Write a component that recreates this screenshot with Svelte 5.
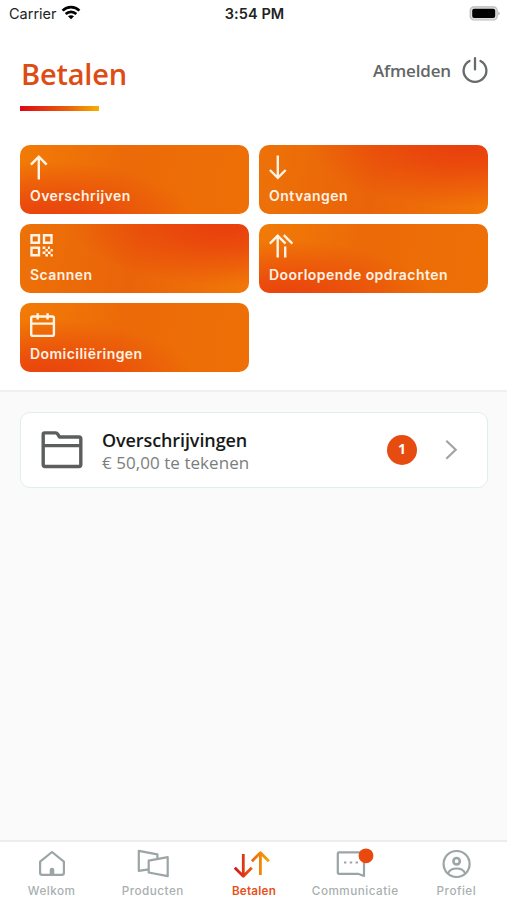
<script lang="ts">
  const actions = [
    { label: 'Overschrijven', icon: 'up', tone: 'low' },
    { label: 'Ontvangen', icon: 'down', tone: 'high' },
    { label: 'Scannen', icon: 'qr', tone: 'high' },
    { label: 'Doorlopende opdrachten', icon: 'repeat', tone: 'low' },
    { label: 'Domiciliëringen', icon: 'calendar', tone: 'low' }
  ];
  const tabs = [
    { label: 'Welkom', icon: 'home' },
    { label: 'Producten', icon: 'products' },
    { label: 'Betalen', icon: 'pay' },
    { label: 'Communicatie', icon: 'chat' },
    { label: 'Profiel', icon: 'profile' }
  ];
  let active = $state('Betalen');
</script>

<div class="screen">
  <div class="status">
    <div class="carrier">
      <span>Carrier</span>
      <svg width="20" height="15" viewBox="0 0 20 15" fill="none" stroke="#000" stroke-width="2.7">
        <path d="M1.6 5.6C6.3 .9 13.7 .9 18.4 5.6" />
        <path d="M4.7 9C7.7 6.1 12.3 6.1 15.3 9" />
        <path d="M10 14.2L7 11.3C8.7 9.8 11.3 9.8 13 11.3Z" fill="#000" stroke="none" />
      </svg>
    </div>
    <span class="time">3:54 PM</span>
    <svg class="battery" width="31" height="15" viewBox="0 0 31 15">
      <rect x="1.2" y=".8" width="27" height="13.2" rx="3.8" fill="#ddd" stroke="#bbb" stroke-width="1.2" />
      <rect x="3.2" y="2.7" width="23" height="9.4" rx="2" fill="#000" />
      <path d="M29.4 5.2Q32 7.4 29.4 9.6Z" fill="#aaa" />
    </svg>
  </div>

  <section class="top">
    <header>
      <div class="heading">
        <h1>Betalen</h1>
        <div class="underline"></div>
      </div>
      <button class="logout">
        <span>Afmelden</span>
        <svg width="26" height="27" viewBox="0 0 26 27" fill="none" stroke="#666a6a" stroke-width="2.3" stroke-linecap="round">
          <path d="M13 1.2V12.4M7.5 3.9A11.4 11.2 0 1 0 18.5 3.9" />
        </svg>
      </button>
    </header>

    <div class="actions">
      {#each actions as action}
        <button class="tile {action.tone}">
          <svg width="28" height="26" viewBox="0 0 28 26" fill="none" stroke="#fff4e6" stroke-width="2.4">
            {#if action.icon === 'up'}
              <path d="M8.8 25.4V3M.9 10.6L8.8 2.7L16.7 10.6" />
            {:else if action.icon === 'down'}
              <path d="M8.8 1.4V23.8M.9 16L8.8 23.9L16.7 16" />
            {:else if action.icon === 'qr'}
              <path d="M1.5 2.3H9V9.8H1.5ZM14 2.3H21.5V9.8H14ZM1.5 14.7H9V22.3H1.5Z" />
              <path
                d="M12.6 13.4h2.8v2.5h-2.8zM17.9 13.4h2v2.5h-2zM20.6 15.9h2.2v2.5h-2.2zM15.4 15.9h2.5v2.5h-2.5zM12.6 18.4h2.8v2.5h-2.8zM17.9 18.4h2.7v2.5h-2.7zM15.4 20.9h2.5v2.6h-2.5zM20.6 20.9h2.2v2.6h-2.2z"
                fill="#fff4e6"
                stroke="none"
              />
            {:else if action.icon === 'repeat'}
              <path d="M8.7 24.5V3M.8 10.6L8.7 2.7L16.6 10.6M14.8 2.2L23.4 10.7M16.2 13.5V24.5" />
            {:else}
              <rect x="1.2" y="4.5" width="22.7" height="19.4" rx="1.6" />
              <path d="M1.2 11.6H24M7.7 1.2V7.6M17.6 1.2V7.6" />
            {/if}
          </svg>
          <span>{action.label}</span>
        </button>
      {/each}
    </div>
  </section>

  <main>
    <button class="card">
      <svg width="42" height="38" viewBox="0 0 42 38" fill="none" stroke="#5c5e5e" stroke-width="3.4" stroke-linejoin="round">
        <path d="M3.5 1.9H14.5Q16 1.9 16.7 3.2L18.5 6H38Q39.8 6 39.8 7.8V33.6Q39.8 35.5 38 35.5H4Q2.2 35.5 2.2 33.6V3.3Q2.2 1.9 3.5 1.9ZM2.2 14.6H39.8" />
      </svg>
      <div class="info">
        <strong>Overschrijvingen</strong>
        <span>€ 50,00 te tekenen</span>
      </div>
      <div class="count">1</div>
      <svg class="chevron" width="13" height="22" viewBox="0 0 13 22" fill="none" stroke="#a0a4a4" stroke-width="2.2">
        <path d="M1.3 1.8L10.7 10.8L1.3 19.8" />
      </svg>
    </button>
  </main>

  <nav>
    {#each tabs as tab}
      <button class="tab" class:active={active === tab.label} onclick={() => (active = tab.label)}>
        <svg width="38" height="30" viewBox="0 0 38 30" fill="none" stroke="#9ba5a6" stroke-width="2.2" stroke-linejoin="round">
          {#if tab.icon === 'home'}
            <path d="M7.1 13.6L19 4L30.9 13.6V24.7Q30.9 26.9 28.7 26.9H9.3Q7.1 26.9 7.1 24.7Z" />
            <path d="M16.7 26.4V21.9Q16.7 19.8 19 19.8T21.3 21.9V26.4Z" fill="#9ba5a6" stroke="none" />
          {:else if tab.icon === 'products'}
            <path d="M14.7 21.3L4.8 22.8V2.8L23.4 6.4V10.6" />
            <path d="M14.7 12.6L33.7 9.2V28.2L14.7 24.5Z" />
          {:else if tab.icon === 'pay'}
            <defs>
              <linearGradient id="pay-down" gradientUnits="userSpaceOnUse" x1="-1" y1="0" x2="17" y2="0">
                <stop offset="0" stop-color="#cf121b" />
                <stop offset="1" stop-color="#ef5b0c" />
              </linearGradient>
              <linearGradient id="pay-up" gradientUnits="userSpaceOnUse" x1="16" y1="0" x2="35" y2="0">
                <stop offset="0" stop-color="#ea6410" />
                <stop offset="1" stop-color="#f9a800" />
              </linearGradient>
            </defs>
            <path d="M8.3 6V27.6M-.2 19.7L8.3 28.2L16.8 19.7" stroke="url(#pay-down)" stroke-width="2.8" />
            <path d="M25.4 27V5M16.9 13.2L25.4 4.7L33.9 13.2" stroke="url(#pay-up)" stroke-width="2.8" />
          {:else if tab.icon === 'chat'}
            <path d="M3 4.4H28V28L22.1 25.8H3Q1.8 25.8 1.8 24.6V5.6Q1.8 4.4 3 4.4Z" />
            <path d="M8 14.6H10.4M13.8 14.6H16.2M19.6 14.6H22" stroke-width="2" />
            <circle cx="30" cy="7.8" r="7.4" fill="#e8490f" stroke="none" />
          {:else}
            <circle cx="19.6" cy="16" r="13" />
            <circle cx="19.6" cy="13.2" r="3.2" stroke-width="2.6" />
            <path d="M11.1 25.3Q13.3 20.5 19.6 20.5T28.1 25.3" />
          {/if}
        </svg>
        <span>{tab.label}</span>
      </button>
    {/each}
  </nav>
</div>

<style>
:global(body) {
  margin: 0;
}
.screen {
  width: 507px;
  height: 900px;
  display: flex;
  flex-direction: column;
  background: #fafafa;
  font-family: Inter, sans-serif;
  overflow: hidden;
}
button {
  border: none;
  padding: 0;
  background: none;
  font-family: inherit;
  text-align: left;
  cursor: pointer;
}
svg {
  display: block;
  flex-shrink: 0;
  overflow: visible;
}
.status {
  box-sizing: border-box;
  height: 28px;
  padding: 0 7px 2px 9px;
  display: grid;
  grid-template-columns: 1fr auto 1fr;
  align-items: center;
  background: #fff;
  font-size: 14.5px;
  color: #222;
}
.carrier {
  display: flex;
  align-items: center;
  gap: 4px;
}
.carrier svg {
  margin-top: -1px;
}
.time {
  font-weight: 600;
  letter-spacing: 0.1px;
}
.battery {
  justify-self: end;
}
.top {
  box-sizing: border-box;
  height: 364px;
  padding: 0 19px 0 20px;
  background: #fff;
  border-bottom: 2px solid #eff1f1;
}
header {
  height: 117.4px;
  display: flex;
  justify-content: space-between;
}
h1 {
  margin: 27px 0 14px 1px;
  font-family: 'Open Sans', sans-serif;
  font-size: 29px;
  line-height: 37px;
  font-weight: 600;
  letter-spacing: -0.2px;
  color: #dd4c12;
}
.underline {
  width: 79px;
  height: 5px;
  background: linear-gradient(90deg, #dd0717, #e9600c 60%, #f7b000);
}
.logout {
  height: 27px;
  margin-top: 29px;
  display: flex;
  align-items: center;
  gap: 11px;
  font-family: 'Open Sans', sans-serif;
  font-size: 17px;
  font-weight: 600;
  letter-spacing: -0.15px;
  color: #636666;
}
.actions {
  display: grid;
  grid-template-columns: repeat(2, 229px);
  grid-auto-rows: 69px;
  gap: 9.6px 10px;
}
.tile {
  box-sizing: border-box;
  padding: 9px 10px 0;
  border-radius: 10px;
  display: flex;
  flex-direction: column;
  color: #fff2e4;
  font-size: 14px;
  line-height: 18px;
  font-weight: 600;
}
.tile span {
  margin-top: 7px;
  letter-spacing: 0.45px;
  white-space: nowrap;
}
.tile.low {
  background:
    radial-gradient(ellipse 65% 85% at 10% 108%, #e9410e, #e9420dc0 35%, #e9420d00 100%),
    linear-gradient(100deg, #f27b07, #ec6a08 45%, #ee7006);
}
.tile.high {
  background:
    radial-gradient(ellipse 68% 95% at 90% -5%, #e93d0e, #e9400dd0 35%, #e9400d00 100%),
    linear-gradient(100deg, #ed7208, #ea6309 50%, #f17808);
}
main {
  flex: 1;
  padding: 20px 19px 0 20px;
}
.card {
  box-sizing: border-box;
  width: 100%;
  height: 76px;
  padding: 0 29px 0 20px;
  display: flex;
  align-items: center;
  background: #fff;
  border: 1.5px solid #dfeeee;
  border-radius: 10px;
  font-family: 'Open Sans', sans-serif;
}
.info {
  flex: 1;
  margin: 2px 0 0 19px;
  display: flex;
  flex-direction: column;
  line-height: 23px;
}
.info strong {
  font-size: 18px;
  font-weight: 600;
  letter-spacing: -0.1px;
  color: #171919;
}
.info span {
  font-size: 17px;
  line-height: 22px;
  letter-spacing: 0.05px;
  color: #7b7e7e;
}
.count {
  width: 30px;
  height: 30px;
  margin-right: 28px;
  border-radius: 50%;
  background: #e64b0f;
  color: #fff;
  font-size: 14px;
  font-weight: 700;
  line-height: 28px;
  text-align: center;
}
nav {
  box-sizing: border-box;
  height: 60px;
  padding: 6px 0 0 1px;
  display: grid;
  grid-template-columns: repeat(5, 1fr);
  background: #fff;
  border-top: 2px solid #ebecec;
}
.tab {
  display: flex;
  flex-direction: column;
  align-items: center;
  font-size: 11.7px;
  line-height: 16px;
  color: #a8afb0;
  font-weight: 500;
}
.tab span {
  margin-top: 5px;
  letter-spacing: 0.5px;
}
.tab.active {
  color: #e8501a;
  font-weight: 600;
}
.tab.active span {
  letter-spacing: 0.2px;
}
</style>
